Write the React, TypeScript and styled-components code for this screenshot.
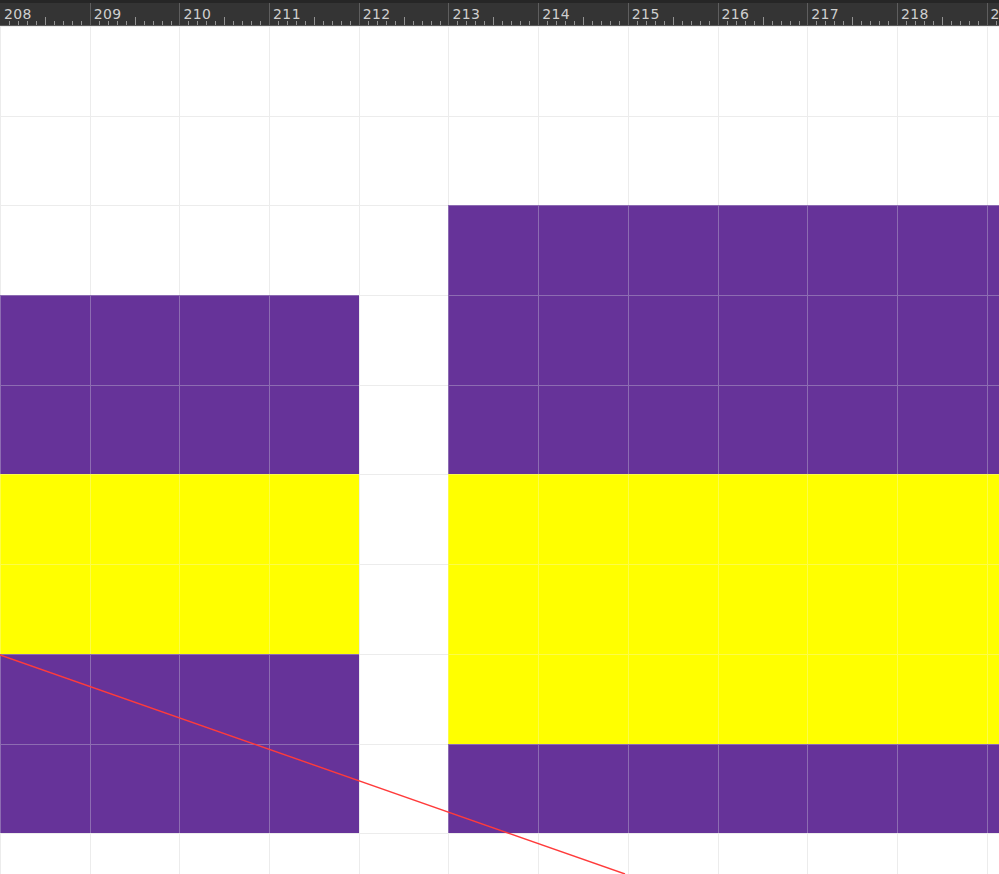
import React from 'react';
import styled, { createGlobalStyle } from 'styled-components';

const CELL = 89.7;
const COLS = 12;
const START = 208;

const rows = [
  'WWWWWWWWWWWW',
  'WWWWWWWWWWWW',
  'WWWWWPPPPPPP',
  'PPPPWPPPPPPP',
  'PPPPWPPPPPPP',
  'YYYYWYYYYYYY',
  'YYYYWYYYYYYY',
  'PPPPWYYYYYYY',
  'PPPPWPPPPPPP',
  'WWWWWWWWWWWW',
];

const GlobalStyle = createGlobalStyle`
  html, body {
    margin: 0;
    padding: 0;
    background: #ffffff;
    overflow: hidden;
  }
`;

const Screen = styled.div`
  width: 999px;
  height: 874px;
  overflow: hidden;
  display: flex;
  flex-direction: column;
  background: #ffffff;
`;

const Ruler = styled.div`
  display: flex;
  height: 26px;
  flex-shrink: 0;
  background: #343434;
  border-top: 3px solid #262626;
  border-bottom: 1px solid #5a5a5a;
  box-sizing: border-box;
  overflow: hidden;
`;

const Segment = styled.div<{ $first: boolean }>`
  position: relative;
  flex: 0 0 ${CELL}px;
  height: 100%;
  box-sizing: border-box;
  border-left: 1px solid ${(p) => (p.$first ? 'transparent' : '#5e5e5e')};
`;

const Label = styled.span`
  position: absolute;
  left: 3px;
  top: 2px;
  font-family: 'DejaVu Sans', sans-serif;
  font-size: 14px;
  line-height: 18px;
  color: #cfcfcf;
  letter-spacing: 0.4px;
`;

const Ticks = styled.div`
  position: absolute;
  left: 0;
  right: 0;
  bottom: 0;
  height: 9px;
  display: flex;
  align-items: flex-end;
  padding-left: 8px;
  gap: 8px;
`;

const Tick = styled.span<{ $tall: boolean }>`
  width: 1px;
  height: ${(p) => (p.$tall ? 8 : 4)}px;
  background: #929292;
`;

const Canvas = styled.div`
  position: relative;
  flex: 1;
  overflow: hidden;
`;

const Grid = styled.div`
  display: grid;
  grid-template-columns: repeat(${COLS}, ${CELL}px);
  grid-auto-rows: ${CELL}px;
`;

const colors: Record<string, { bg: string; line: string }> = {
  W: { bg: '#ffffff', line: '#ececec' },
  P: { bg: '#663399', line: '#8d6cb2' },
  Y: { bg: '#ffff00', line: '#fcfc48' },
};

const Cell = styled.div<{ $kind: string }>`
  box-sizing: border-box;
  background: ${(p) => colors[p.$kind].bg};
  border-left: 1px solid ${(p) => colors[p.$kind].line};
  border-top: 1px solid ${(p) => colors[p.$kind].line};
`;

const Overlay = styled.svg`
  position: absolute;
  left: 0;
  top: 0;
  pointer-events: none;
`;

export default function App() {
  return (
    <>
      <GlobalStyle />
      <Screen>
        <Ruler>
          {Array.from({ length: COLS }).map((_, i) => (
            <Segment key={i} $first={i === 0}>
              <Label>{START + i}</Label>
              <Ticks>
                {Array.from({ length: 9 }).map((__, t) => (
                  <Tick key={t} $tall={t === 4} />
                ))}
              </Ticks>
            </Segment>
          ))}
        </Ruler>
        <Canvas>
          <Grid>
            {rows.map((row, r) =>
              row.split('').map((k, c) => <Cell key={`${r}-${c}`} $kind={k} />)
            )}
          </Grid>
          <Overlay width={999} height={848}>
            <line x1={0} y1={629} x2={625} y2={848} stroke="#ff3b3b" strokeWidth={1.4} />
          </Overlay>
        </Canvas>
      </Screen>
    </>
  );
}
